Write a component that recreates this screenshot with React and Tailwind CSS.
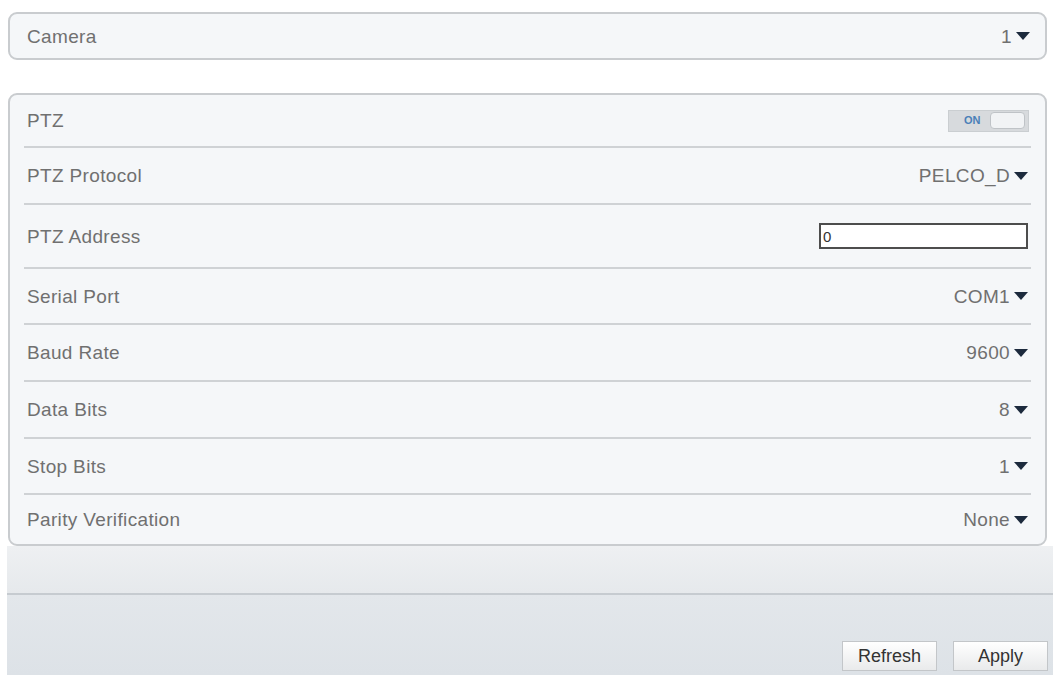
import React from "react";

function Caret() {
  return (
    <svg width="14" height="8" viewBox="0 0 14 8" className="ml-[4px] shrink-0">
      <path d="M0 0 L14 0 L7 8 Z" fill="#1c2a3d" />
    </svg>
  );
}

function Select({ value }) {
  return (
    <div className="flex items-center text-[#707070]">
      <span>{value}</span>
      <Caret />
    </div>
  );
}

function Sep() {
  return <div className="h-[2px] mx-[14px] bg-[#cfd2d5]" />;
}

function Row({ h, label, children }) {
  return (
    <div className={`${h} flex items-center justify-between pl-[17px] pr-[17px]`}>
      <span className="text-[#707070]">{label}</span>
      {children}
    </div>
  );
}

export default function App() {
  return (
    <div
      className="w-[1053px] h-[675px] bg-white overflow-hidden flex flex-col text-[19px] tracking-[0.35px] leading-none"
      style={{ fontFamily: '"Liberation Sans", Arial, sans-serif' }}
    >
      <div className="mt-[12px] mx-[8px] w-[1039px] h-[48px] rounded-[9px] border-2 border-[#c9cccf] bg-[#f5f7f9] flex items-center justify-between pl-[17px] pr-[15px]">
        <span className="text-[#707070]">Camera</span>
        <Select value="1" />
      </div>

      <div className="mt-[33px] mx-[8px] w-[1039px] rounded-[9px] border-2 border-[#c9cccf] bg-[#f5f7f9] flex flex-col">
        <Row h="h-[51px]" label="PTZ">
          <div className="w-[81px] h-[22px] mr-[-1px] bg-[#d7dadd] border border-[#caced1] flex items-center justify-between pl-[15px] pr-[3px]">
            <span className="text-[11px] tracking-normal font-bold text-[#4a80b8] leading-none">ON</span>
            <div className="w-[35px] h-[17px] rounded-[4px] bg-[#f1f3f5] border border-[#bfc3c7]" />
          </div>
        </Row>
        <Sep />
        <Row h="h-[55px]" label="PTZ Protocol">
          <Select value="PELCO_D" />
        </Row>
        <Sep />
        <Row h="h-[62px]" label="PTZ Address">
          <div className="w-[209px] h-[26px] bg-white border-2 border-[#4d4d4d] flex items-center pl-[2px] text-[15px] tracking-normal text-[#333]">
            0
          </div>
        </Row>
        <Sep />
        <Row h="h-[54px]" label="Serial Port">
          <Select value="COM1" />
        </Row>
        <Sep />
        <Row h="h-[55px]" label="Baud Rate">
          <Select value="9600" />
        </Row>
        <Sep />
        <Row h="h-[55px]" label="Data Bits">
          <Select value="8" />
        </Row>
        <Sep />
        <Row h="h-[54px]" label="Stop Bits">
          <Select value="1" />
        </Row>
        <Sep />
        <Row h="h-[49px]" label="Parity Verification">
          <Select value="None" />
        </Row>
      </div>

      <div className="ml-[7px] flex-1 flex flex-col">
        <div className="h-[47px] bg-gradient-to-b from-[#eef0f2] to-[#e6e9ec]" />
        <div className="h-[2px] bg-[#c6cbd0]" />
        <div className="flex-1 bg-gradient-to-b from-[#e3e7eb] to-[#dde2e7] flex items-end justify-end gap-[16px] pb-[4px] pr-[5px]">
          <button className="w-[95px] h-[30px] border border-[#c3c6c9] bg-gradient-to-b from-[#ffffff] to-[#e9eaeb] text-[18px] tracking-normal text-[#333]">
            Refresh
          </button>
          <button className="w-[95px] h-[30px] border border-[#c3c6c9] bg-gradient-to-b from-[#ffffff] to-[#e9eaeb] text-[18px] tracking-normal text-[#333]">
            Apply
          </button>
        </div>
      </div>
    </div>
  );
}
